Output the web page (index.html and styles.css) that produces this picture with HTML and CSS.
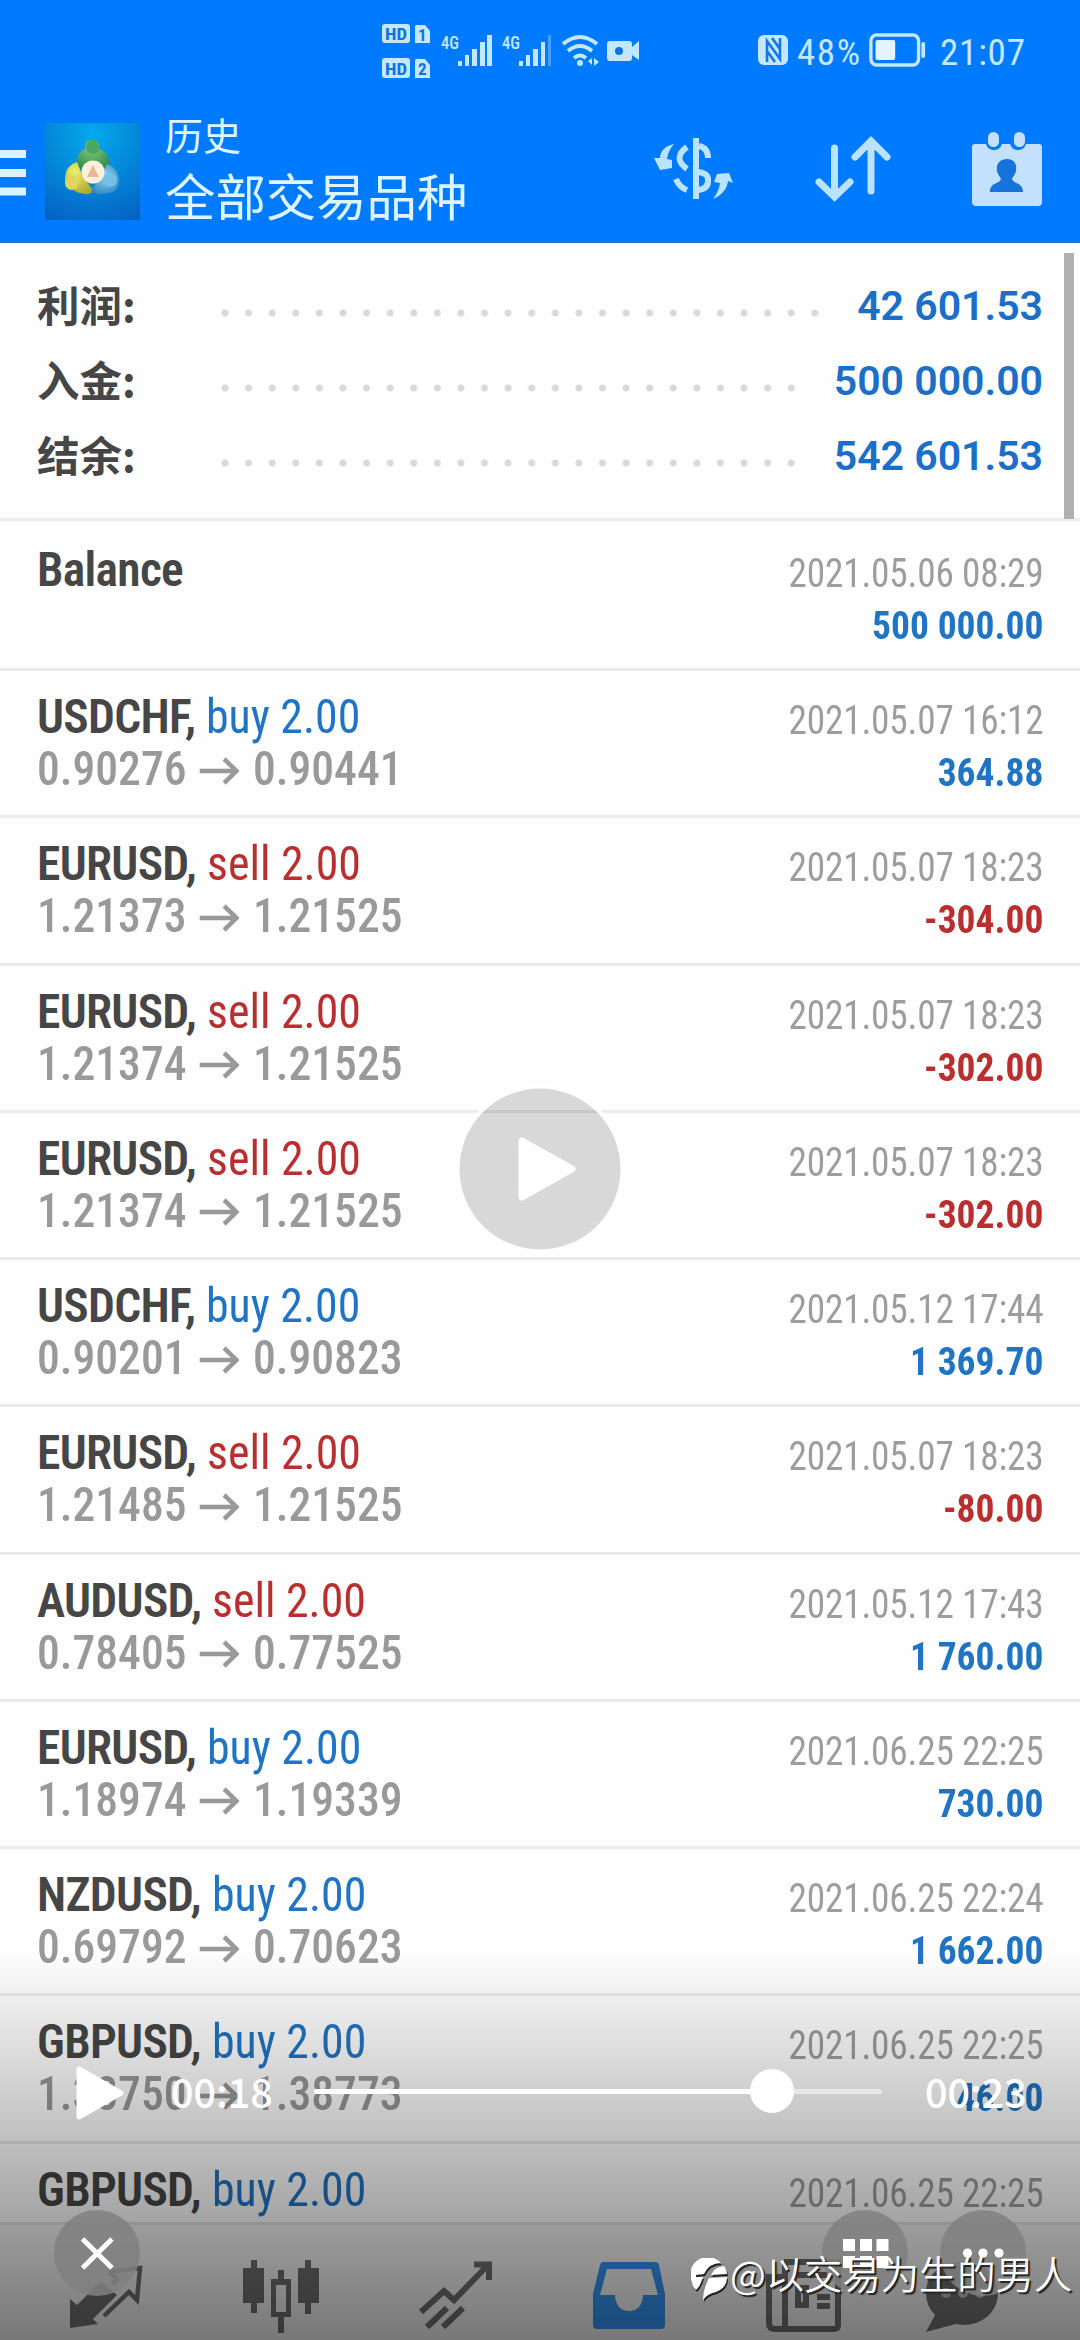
FILE: index.html
```html
<!DOCTYPE html>
<html lang="zh-CN">
<head>
<meta charset="utf-8">
<title>历史</title>
<link rel="stylesheet" href="styles.css">
</head>
<body>
<svg width="0" height="0" class="defs">
  <symbol id="arrow" viewBox="0 0 42 28"><path d="M0 14H39M26 2L39 14L26 26" fill="none" stroke="currentColor" stroke-width="4.6"/></symbol>
</svg>
<div class="screen">
  <header class="header">
    <div class="status">
      <svg class="status-left" width="260" height="60" viewBox="380 20 260 60" fill="currentColor">
        <rect x="382" y="24" width="28" height="19" rx="3"/><path d="M416 25h9l5 6v12h-15V26z"/>
        <rect x="382" y="58" width="28" height="20" rx="3"/><path d="M416 59h9l5 6v13h-15V60z"/>
        <g class="badge-text"><text x="385" y="40" textLength="22" lengthAdjust="spacingAndGlyphs">HD</text><text x="418" y="41" textLength="8">1</text><text x="385" y="75" textLength="22" lengthAdjust="spacingAndGlyphs">HD</text><text x="418" y="75" textLength="8">2</text></g>
        <text class="net" x="441" y="49" textLength="18" lengthAdjust="spacingAndGlyphs">4G</text>
        <path d="M458 61h4v5h-4zM465 55h4v11h-4zM472 49h5v17h-5zM480 42h5v24h-5zM487 35h5v31h-5z"/>
        <text class="net" x="502" y="49" textLength="18" lengthAdjust="spacingAndGlyphs">4G</text>
        <path d="M519 61h4v5h-4zM526 55h4v11h-4zM533 49h5v17h-5zM541 42h4v24h-4z"/><path d="M548 35h3v31h-3z" opacity=".35"/>
        <g fill="none" stroke="currentColor" stroke-width="4"><path d="M563 44q17-14 34 0M568 51q12-10 24 0M574 58q6-5 12 0"/></g>
        <circle cx="580" cy="63" r="3"/><path d="M588 61l4-3v7zM594 58l5 4-5 4z"/>
        <path d="M610 41h19q3 0 3 3v3l7-6v19l-7-5v3q0 3-3 3h-19q-3 0-3-3V44q0-3 3-3z"/><circle cx="619" cy="51" r="4" fill="#1672d8"/>
      </svg>
      <div class="status-right">
        <svg width="30" height="30" viewBox="0 0 30 30"><rect width="30" height="30" rx="6" fill="currentColor"/><path d="M9 27V6l13 18V3M14 3l8 11M9 16l8 11" fill="none" stroke="#1475e6" stroke-width="2.6"/></svg>
        <span class="pct">48%</span>
        <svg width="58" height="34" viewBox="0 0 62 34" preserveAspectRatio="none"><rect x="2" y="2" width="51" height="30" rx="6" fill="none" stroke="currentColor" stroke-width="3.6"/><rect x="7" y="7" width="21" height="20" rx="2" fill="#e4f3ff"/><rect x="56" y="9" width="4" height="16" rx="2" fill="currentColor"/></svg>
        <span class="time">21:07</span>
      </div>
    </div>
    <div class="appbar">
      <svg class="menu" width="26" height="46" viewBox="0 0 26 46"><path d="M0 4h26M0 23h26M0 41.500h26" stroke="#d9f3ff" stroke-width="8"/></svg>
      <svg class="logo" width="95" height="97" viewBox="0 0 95 97">
        <defs>
          <radialGradient id="lg" cx="50%" cy="12%" r="95%"><stop offset="0" stop-color="#04a9ee"/><stop offset=".5" stop-color="#0388d8"/><stop offset="1" stop-color="#0563c4"/></radialGradient>
          <radialGradient id="gr" cx="45%" cy="20%" r="80%"><stop offset="0" stop-color="#8fcb7c"/><stop offset="1" stop-color="#23874b"/></radialGradient>
          <radialGradient id="ye" cx="35%" cy="30%" r="80%"><stop offset="0" stop-color="#eef06a"/><stop offset="1" stop-color="#a7a52c"/></radialGradient>
          <radialGradient id="bl" cx="50%" cy="40%" r="80%"><stop offset="0" stop-color="#8fd4f2"/><stop offset="1" stop-color="#1878b8"/></radialGradient>
        </defs>
        <rect width="95" height="97" fill="url(#lg)"/>
        <path d="M32 45Q31 28 40 26Q39 17 47 17Q55 17 55 26Q66 31 65 45L57 50Z" fill="url(#gr)"/>
        <path d="M49 68Q44 73 35 70Q29 69 28 65Q19 63 20 55Q21 42 32 39L38 54Z" fill="url(#ye)"/>
        <path d="M46 68L54 56L62 41Q74 45 74 59Q73 70 62 70Q52 73 46 68Z" fill="url(#bl)"/>
        <circle cx="27" cy="60" r="7" fill="#e0d45a"/><circle cx="48" cy="24" r="7" fill="#4aa861"/><circle cx="65" cy="57" r="7" fill="#74c0e6"/>
        <circle cx="48" cy="49" r="11.500" fill="#fff0dc"/><path d="M48 42l6 12H42z" fill="#e8b796"/>
      </svg>
      <div class="titles"><div class="t1">历史</div><div class="t2">全部交易品种</div></div>
      <div class="tools">
        <svg width="80" height="66" viewBox="655 136 80 66" fill="none" stroke="#b9e3ff" stroke-width="6">
          <path d="M697 138V199M688 147q-15 11 0 22M677 179q3 8 11 11M700 146q9 2 9 12M699 172q11 1 10 9q0 8-10 9"/>
          <path d="M675 144C666 146 661 151 661 158L655 158L661 170L673 168L673 160L668 159Q669 151 675 144zM714 199C723 195 728 189 729 181L734 183L730 173L718 174L715 182L721 183Q720 191 714 199z" fill="#b9e3ff" stroke="none"/>
        </svg>
        <svg width="76" height="66" viewBox="813 136 76 66" fill="none" stroke="#b9e3ff" stroke-width="7" stroke-linecap="round"><path d="M832.500 148V195M817 182L832.500 197L848 182M869 191V142M853 157L869 141L885 157"/></svg>
        <svg width="70" height="74" viewBox="972 132 70 74" fill="#c3e1ff"><path d="M975 144h11q2 6 8 6t8-6h8q2 6 8 6t8-6h13q3 0 3 3v55q0 4-4 4h-62q-4 0-4-4v-55q0-3 3-3z"/><rect x="988" y="132" width="11" height="15" rx="5.500"/><rect x="1014" y="132" width="11" height="15" rx="5.500"/><path d="M1007 159c7 0 10 5 9 11c0 4-3 6-4 9c1 5 11 3 11 13h-33c0-10 10-8 11-13c-1-3-4-5-4-9c-1-6 3-11 10-11z" fill="#1673db"/></svg>
      </div>
    </div>
  </header>

  <section class="summary">
    <div class="sum"><span class="lab">利润:</span><span class="dots n26"></span><span class="val">42 601.53</span></div>
    <div class="sum"><span class="lab">入金:</span><span class="dots n25"></span><span class="val">500 000.00</span></div>
    <div class="sum"><span class="lab">结余:</span><span class="dots n25"></span><span class="val">542 601.53</span></div>
    <i class="scrollbar"></i>
  </section>

  <main class="list">
    <div class="row first"><div class="l"><div class="name"><b>Balance</b></div></div><div class="r"><div class="date">2021.05.06 08:29</div><div class="amt buy">500 000.00</div></div></div>
    <div class="row"><div class="l"><div class="name"><b>USDCHF,</b> <span class="buy">buy 2.00</span></div><div class="price">0.90276<svg><use href="#arrow"/></svg>0.90441</div></div><div class="r"><div class="date">2021.05.07 16:12</div><div class="amt buy">364.88</div></div></div>
    <div class="row"><div class="l"><div class="name"><b>EURUSD,</b> <span class="sell">sell 2.00</span></div><div class="price">1.21373<svg><use href="#arrow"/></svg>1.21525</div></div><div class="r"><div class="date">2021.05.07 18:23</div><div class="amt sell">-304.00</div></div></div>
    <div class="row"><div class="l"><div class="name"><b>EURUSD,</b> <span class="sell">sell 2.00</span></div><div class="price">1.21374<svg><use href="#arrow"/></svg>1.21525</div></div><div class="r"><div class="date">2021.05.07 18:23</div><div class="amt sell">-302.00</div></div></div>
    <div class="row"><div class="l"><div class="name"><b>EURUSD,</b> <span class="sell">sell 2.00</span></div><div class="price">1.21374<svg><use href="#arrow"/></svg>1.21525</div></div><div class="r"><div class="date">2021.05.07 18:23</div><div class="amt sell">-302.00</div></div></div>
    <div class="row"><div class="l"><div class="name"><b>USDCHF,</b> <span class="buy">buy 2.00</span></div><div class="price">0.90201<svg><use href="#arrow"/></svg>0.90823</div></div><div class="r"><div class="date">2021.05.12 17:44</div><div class="amt buy">1 369.70</div></div></div>
    <div class="row"><div class="l"><div class="name"><b>EURUSD,</b> <span class="sell">sell 2.00</span></div><div class="price">1.21485<svg><use href="#arrow"/></svg>1.21525</div></div><div class="r"><div class="date">2021.05.07 18:23</div><div class="amt sell">-80.00</div></div></div>
    <div class="row"><div class="l"><div class="name"><b>AUDUSD,</b> <span class="sell">sell 2.00</span></div><div class="price">0.78405<svg><use href="#arrow"/></svg>0.77525</div></div><div class="r"><div class="date">2021.05.12 17:43</div><div class="amt buy">1 760.00</div></div></div>
    <div class="row"><div class="l"><div class="name"><b>EURUSD,</b> <span class="buy">buy 2.00</span></div><div class="price">1.18974<svg><use href="#arrow"/></svg>1.19339</div></div><div class="r"><div class="date">2021.06.25 22:25</div><div class="amt buy">730.00</div></div></div>
    <div class="row"><div class="l"><div class="name"><b>NZDUSD,</b> <span class="buy">buy 2.00</span></div><div class="price">0.69792<svg><use href="#arrow"/></svg>0.70623</div></div><div class="r"><div class="date">2021.06.25 22:24</div><div class="amt buy">1 662.00</div></div></div>
    <div class="row"><div class="l"><div class="name"><b>GBPUSD,</b> <span class="buy">buy 2.00</span></div><div class="price">1.38750<svg><use href="#arrow"/></svg>1.38773</div></div><div class="r"><div class="date">2021.06.25 22:25</div><div class="amt buy">46.00</div></div></div>
    <div class="row"><div class="l"><div class="name"><b>GBPUSD,</b> <span class="buy">buy 2.00</span></div></div><div class="r"><div class="date">2021.06.25 22:25</div></div></div>
  </main>

  <nav class="nav">
    <svg viewBox="66 2256 80 80"><path d="M70 2328V2299L77 2305L101 2281L117 2295L93 2319L98 2324Z" fill="#6f6f6f"/><path d="M109 2272L140 2268L137 2300L129 2292L104 2316M109 2272L117 2279L112 2284" fill="none" stroke="#6f6f6f" stroke-width="4.500"/></svg>
    <svg viewBox="240 2256 80 80"><path d="M250 2260h6v8h7v35h-7v10h-6v-10h-8v-35h8zM304 2260h6v8h8v35h-8v11h-6v-11h-7v-35h7zM277 2270h6v9h7v38h-7v16h-6v-16h-7v-38h7zM275 2285v27h10v-27z" fill="#6f6f6f" fill-rule="evenodd"/></svg>
    <svg viewBox="414 2256 80 80"><path d="M420 2312L443 2291L453 2300L487 2265M473 2264.500H488V2280M446 2308L426 2327M462 2308L442 2327" fill="none" stroke="#6f6f6f" stroke-width="6"/></svg>
    <svg viewBox="589 2256 80 80"><path d="M603 2262h52q3 0 4 3l6 29v31q0 4-4 4h-64q-4 0-4-4v-31l7-29q1-3 3-3zM607 2269l-7 26h15q1 16 14 16t14-16h15l-7-26z" fill="#3594f4" fill-rule="evenodd"/></svg>
    <svg viewBox="763 2256 80 80"><g fill="none" stroke="#6f6f6f" stroke-width="6"><path d="M783 2262H837V2325Q837 2329 833 2329H774Q768 2329 768 2323V2277H783M784 2262V2329M796 2275H826"/><path d="M797 2288h8v17h-8zM816 2297h13M816 2306h13"/></g></svg>
    <svg viewBox="922 2256 80 80"><path d="M962 2262C984 2262 998 2275 998 2293C998 2312 982 2325 963 2325L956 2324Q944 2327 926 2332L935 2315Q926 2306 926 2293C926 2275 941 2262 962 2262Z" fill="#6f6f6f"/><g fill="#bbb"><circle cx="946" cy="2293" r="5"/><circle cx="963" cy="2293" r="5"/><circle cx="980" cy="2293" r="5"/></g></svg>
  </nav>

  <div class="shade"></div>

  <svg class="bigplay" width="170" height="170" viewBox="0 0 170 170"><circle cx="85" cy="85" r="82.500" fill="rgba(0,0,0,.15)" stroke="#fff" stroke-width="4"/><path d="M67 57L117 85L67 113Z" fill="#fff" stroke="#fff" stroke-width="7" stroke-linejoin="round"/></svg>

  <div class="controls">
    <svg class="play" width="48" height="54" viewBox="0 0 48 54"><path d="M3 3L45 27L3 51Z" fill="#fff" stroke="#fff" stroke-width="5" stroke-linejoin="round"/></svg>
    <span class="clock">00:18</span>
    <div class="track"><div class="played"></div><div class="thumb"></div><div class="rest"></div></div>
    <span class="clock">00:23</span>
  </div>

  <div class="buttons">
    <svg width="86" height="86" viewBox="54 2210 86 86"><circle cx="97" cy="2253" r="43" class="disc"/><path d="M82.500 2239L112 2268M112 2239L82.500 2268" stroke="#fff" stroke-width="5"/></svg>
    <svg class="gridbtn" width="86" height="86" viewBox="822 2210 86 86"><circle cx="865" cy="2253" r="43" class="disc"/><path d="M843 2239h12v12h-12zM860 2239h12v12h-12zM876.500 2239h12v12h-12zM843 2256h12v12h-12zM860 2256h12v12h-12zM876.500 2256h12v12h-12z" fill="#fff"/></svg>
    <svg width="86" height="86" viewBox="940 2210 86 86"><circle cx="983" cy="2253" r="43" class="disc"/><g fill="#fff"><circle cx="967.500" cy="2253" r="4.600"/><circle cx="983" cy="2253" r="4.600"/><circle cx="999" cy="2253" r="4.600"/></g></svg>
  </div>

  <div class="watermark">
    <svg width="38" height="44" viewBox="0 0 38 44"><path d="M1 24A17.500 17.500 0 0 1 30 5Q18 5 13 16L5 17V19L12 19Q9 29 5 32Q1 28 1 24ZM33 8Q36 12 36 16L20 17Q23 9 33 8ZM18 20L36 19Q36 30 25 34Q16 36 12 42Q12 32 18 20Z" fill="#fff"/></svg>
    <span>@以交易为生的男人</span>
  </div>
</div>
</body>
</html>
```
FILE: styles.css
```css
* { box-sizing: border-box; }
body { margin: 0; background: #fff; }
.defs { position: absolute; }
svg { display: block; flex: none; }
.screen {
  position: relative; width: 1080px; height: 2340px; overflow: hidden;
  display: flex; flex-direction: column; background: #fefefe;
  font-family: Roboto, "Noto Sans CJK SC", sans-serif; color: #464646;
}

/* header */
.header { height: 243px; background: #007aff; flex: none; border-bottom: 2px solid #1f78d0; }
.status { height: 100px; padding: 20px 56px 0 380px; display: flex; justify-content: space-between; color: #c2e7ff; }
.badge-text { font: bold 17px "Roboto Condensed", sans-serif; fill: #1271e0; }
.net { font: 500 18px "Roboto Condensed", sans-serif; }
.status-right { display: flex; align-items: center; height: 60px; }
.status-right span { font: 37px/60px "Roboto Condensed", sans-serif; padding-top: 5px; white-space: nowrap; }
.pct { margin: 0 6px 0 9px; letter-spacing: 1.6px; width: 66px; }
.time { margin-left: 13px; letter-spacing: .8px; width: 84px; }
.appbar { height: 141px; display: flex; align-items: flex-start; padding-right: 38px; }
.menu { margin-top: 50px; }
.logo { margin: 23px 0 0 19px; }
.titles { margin: 7px 0 0 25px; color: #dcf6ff; white-space: nowrap; }
.t1 { font: 38px/54px "Noto Sans CJK SC", sans-serif; }
.t2 { font: 50.4px/68px "Noto Sans CJK SC", sans-serif; }
.tools { margin-left: auto; display: flex; gap: 81px; align-items: center; height: 138px; }

/* totals */
.summary { position: relative; height: 275px; flex: none; padding: 26px 37px 0; }
.sum { display: flex; height: 74.7px; align-items: center; }
.lab { width: 184px; padding-bottom: 4px; font: bold 42.5px/70px "Noto Sans CJK SC", sans-serif; }
.dots { height: 8px; margin-top: 14px; background: radial-gradient(circle at 4px 4px, #d9d9d9 3px, transparent 4px) 0 0 / 23.6px 8px; }
.n26 { width: 598px; }
.n25 { width: 575px; }
.val { margin-left: auto; font-size: 41px; font-weight: 600; color: #1b6fc6; white-space: nowrap; }
.scrollbar { position: absolute; left: 1064px; top: 10px; width: 10px; height: 266px; background: #b0b0b0; }

/* deals */
.list { flex: none; height: 1704px; overflow: hidden; font-family: "Roboto Condensed", Roboto, sans-serif; }
.row { height: 147.25px; border-top: 3px solid #ebebeb; padding: 20px 37px 0; display: flex; justify-content: space-between; }
.row.first { height: 150px; padding-top: 23px; }
.name { font-size: 47.5px; line-height: 52px; white-space: pre; }
.name b { font-weight: 600; letter-spacing: -.7px; }
.name span { display: inline-block; transform: scaleX(.965); transform-origin: left; }
.price { font-size: 48px; line-height: 52px; font-weight: 500; color: #999; display: flex; align-items: center; transform: scaleX(.95); transform-origin: left; }
.price svg { width: 42px; height: 28px; margin: 3px 14px 0; }
.r { text-align: right; padding-top: 4px; line-height: 52px; }
.date { font-size: 40px; color: #9d9d9d; letter-spacing: -.2px; transform: scaleX(.932); transform-origin: right; }
.amt { font-size: 39.5px; font-weight: 700; transform: scaleX(.95); transform-origin: right; }
.buy { color: #2074c4; }
.sell { color: #b92f2f; }

/* tab bar */
.nav { height: 118px; flex: none; background: #f4f4f4; border-top: 3px solid #e3e3e3; padding: 31px 0 0 19px; display: grid; grid-template-columns: repeat(5, 174.4px) 143px; justify-items: center; }
.nav svg { width: 80px; height: 80px; }

/* video player layer */
.shade { position: absolute; left: 0; right: 0; bottom: 0; height: 390px; background: linear-gradient(rgba(0,0,0,0), rgba(0,0,0,.51)); }
.bigplay { position: absolute; left: 454.500px; top: 1084px; }
.controls { position: absolute; left: 76px; right: 55px; top: 2061px; height: 60px; display: flex; align-items: center; }
.play { margin-top: 3px; margin-right: 47px; }
.clock { font: 500 39.5px/60px "Noto Sans CJK SC", sans-serif; color: #fff; width: 100px; }
.track { width: 570px; margin: 0 43px 0 43px; display: flex; align-items: center; }
.played { height: 5px; width: 436px; background: #fff; border-radius: 3px 0 0 3px; }
.thumb { width: 44px; height: 44px; border-radius: 50%; background: #fff; flex: none; }
.rest { height: 5px; flex: 1; background: rgba(255,255,255,.5); border-radius: 0 3px 3px 0; }
.buttons { position: absolute; left: 54px; right: 54px; top: 2210px; display: flex; }
.gridbtn { margin-left: auto; margin-right: 32px; }
.disc { fill: rgba(128,128,128,.85); }
.watermark { position: absolute; left: 691px; top: 2243px; display: flex; align-items: center; gap: 1px; color: #fff; font: 350 38.3px/60px "Noto Sans CJK SC", sans-serif; white-space: nowrap; text-shadow: 2px 2px 1px #222; }
.watermark svg { margin-top: 14px; filter: drop-shadow(1px 2px 0 #222); }
```
